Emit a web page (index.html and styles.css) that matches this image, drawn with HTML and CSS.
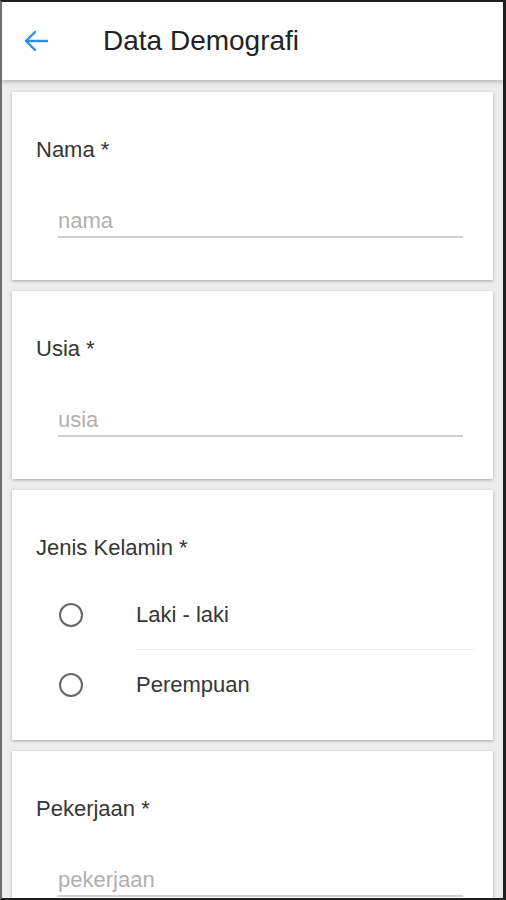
FILE: index.html
```html
<!DOCTYPE html>
<html lang="id">
<head>
  <meta charset="UTF-8">
  <meta name="viewport" content="width=device-width, initial-scale=1.0">
  <title>Data Demografi</title>
  <link rel="stylesheet" href="styles.css">
</head>
<body>
  <div class="device">
    <!-- App bar -->
    <div class="app-bar">
      <svg class="back-icon" width="26" height="24" viewBox="0 0 26 24">
        <path d="M24 12 H3 M12 3 L3 12 L12 21" fill="none" stroke="#2b8fe6" stroke-width="2.4" stroke-linecap="round" stroke-linejoin="round"/>
      </svg>
      <h1 class="app-title">Data Demografi</h1>
    </div>

    <!-- Form cards -->
    <div class="content">
      <div class="card">
        <div class="field-label">Nama *</div>
        <div class="field-input">nama</div>
      </div>

      <div class="card">
        <div class="field-label">Usia *</div>
        <div class="field-input">usia</div>
      </div>

      <div class="card card-radio">
        <div class="field-label">Jenis Kelamin *</div>
        <div class="options">
          <div class="option">
            <span class="radio"></span>
            <span class="option-text">Laki - laki</span>
          </div>
          <div class="option">
            <span class="radio"></span>
            <span class="option-text">Perempuan</span>
          </div>
        </div>
      </div>

      <div class="card">
        <div class="field-label">Pekerjaan *</div>
        <div class="field-input">pekerjaan</div>
      </div>
    </div>
  </div>
</body>
</html>
```

FILE: styles.css
```css
body {
  margin: 0;
  padding: 0;
  font-family: "Liberation Sans", Arial, sans-serif;
  background: #222;
}

.device {
  width: 506px;
  height: 900px;
  box-sizing: border-box;
  border-top: 2px solid #1f1f1f;
  border-left: 2px solid #6f6f6f;
  border-right: 3px solid #1f1f1f;
  border-bottom: 2px solid #1f1f1f;
  background: #ededed;
  overflow: hidden;
}

.app-bar {
  position: relative;
  z-index: 2;
  height: 78px;
  display: flex;
  align-items: center;
  background: #fff;
  box-shadow: 0 2px 4px rgba(0, 0, 0, 0.22);
}

.back-icon {
  margin-left: 21px;
  flex-shrink: 0;
}

.app-title {
  margin: 0 0 0 54px;
  font-size: 28px;
  font-weight: 400;
  color: #222;
}

.content {
  padding: 12px 10px 0;
  display: flex;
  flex-direction: column;
  gap: 11px;
}

.card {
  background: #fff;
  padding: 46px 24px 42px;
  box-shadow: 0 1px 3px rgba(0, 0, 0, 0.3);
}

.field-label {
  font-size: 22px;
  line-height: 24px;
  color: #363636;
}

.field-input {
  margin: 43px 6px 0 22px;
  padding: 4px 0 3px;
  font-size: 22px;
  line-height: 24px;
  color: #b0b0b0;
  border-bottom: 2px solid #cfcfcf;
}

.card-radio {
  padding-bottom: 20px;
}

.options {
  margin-top: 20px;
}

.option {
  display: flex;
  height: 70px;
}

.radio {
  width: 24px;
  height: 24px;
  box-sizing: border-box;
  border: 2px solid #666;
  border-radius: 50%;
  align-self: center;
  margin: 0 53px 0 23px;
  flex-shrink: 0;
}

.option-text {
  flex: 1;
  display: flex;
  align-items: center;
  margin-right: -5px;
  font-size: 22px;
  color: #363636;
}

.option:first-child .option-text {
  border-bottom: 1px solid #eee;
}
```
